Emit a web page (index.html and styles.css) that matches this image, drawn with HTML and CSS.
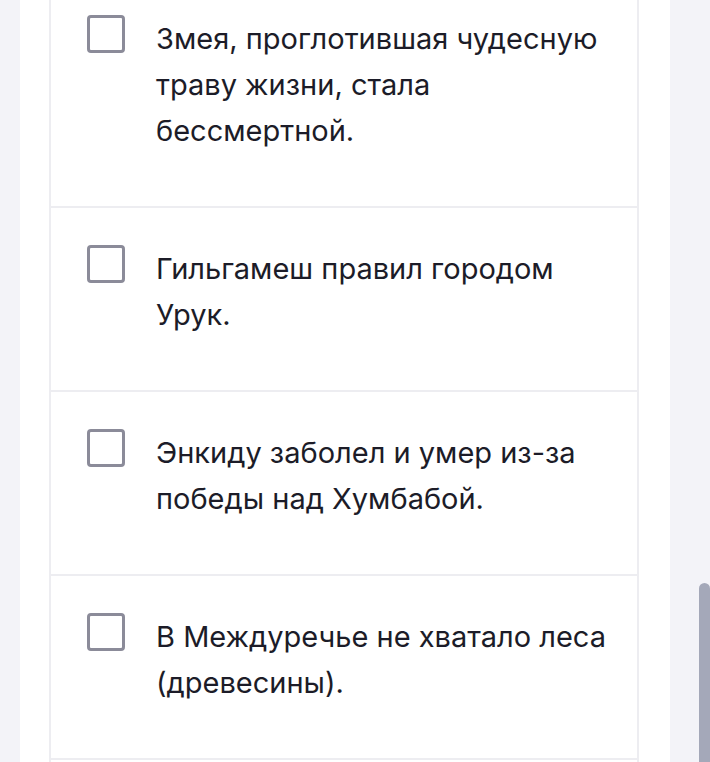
FILE: index.html
```html
<!DOCTYPE html>
<html lang="ru">
  <head>
    <meta charset="UTF-8" />
    <meta name="viewport" content="width=device-width, initial-scale=1.0" />
    <title>Гильгамеш — утверждения</title>
    <link rel="stylesheet" href="styles.css">
  </head>
  <body>
    <div class="page">
      <div class="answer-list">
        <label class="answer-item">
          <span class="answer-box"></span>
          <span class="answer-text">Змея, проглотившая чудесную траву жизни, стала бессмертной.</span>
        </label>
        <label class="answer-item">
          <span class="answer-box"></span>
          <span class="answer-text">Гильгамеш правил городом Урук.</span>
        </label>
        <label class="answer-item">
          <span class="answer-box"></span>
          <span class="answer-text">Энкиду заболел и умер из-за победы над Хумбабой.</span>
        </label>
        <label class="answer-item">
          <span class="answer-box"></span>
          <span class="answer-text">В Междуречье не хватало леса (древесины).</span>
        </label>
      </div>
    </div>
    <div class="scroll-thumb"></div>
  </body>
</html>
```

FILE: styles.css
```css
* {
  padding: 0px;
  margin: 0px;
  box-sizing: border-box;
}
body {
  background-color: #f3f3f8;
  font-family: Inter, "Noto Sans", sans-serif;
  overflow: hidden;
}
.page {
  margin-left: 20px;
  width: 650px;
  min-height: 100vh;
  background-color: #ffffff;
  padding: 0px 31px 0px 29px;
}
.answer-list {
  margin-top: -22px;
  padding-bottom: 40px;
  border-left: 2px solid #ededf1;
  border-right: 2px solid #ededf1;
}
.answer-item {
  display: flex;
  flex-direction: row;
  align-items: flex-start;
  gap: 31px;
  padding: 38px 19px 52px 36px;
  border-bottom: 2px solid #ededf1;
}
.answer-box {
  flex: none;
  width: 38px;
  height: 38px;
  margin-top: -1px;
  border: 3px solid #8b8b99;
  border-radius: 4px;
  background-color: #ffffff;
}
.answer-text {
  font-size: 29px;
  line-height: 46px;
  color: #1c1c28;
}
.scroll-thumb {
  position: fixed;
  right: 0px;
  top: 583px;
  width: 11px;
  height: 220px;
  border-radius: 6px;
  background-color: #a4a8b9;
}
```
